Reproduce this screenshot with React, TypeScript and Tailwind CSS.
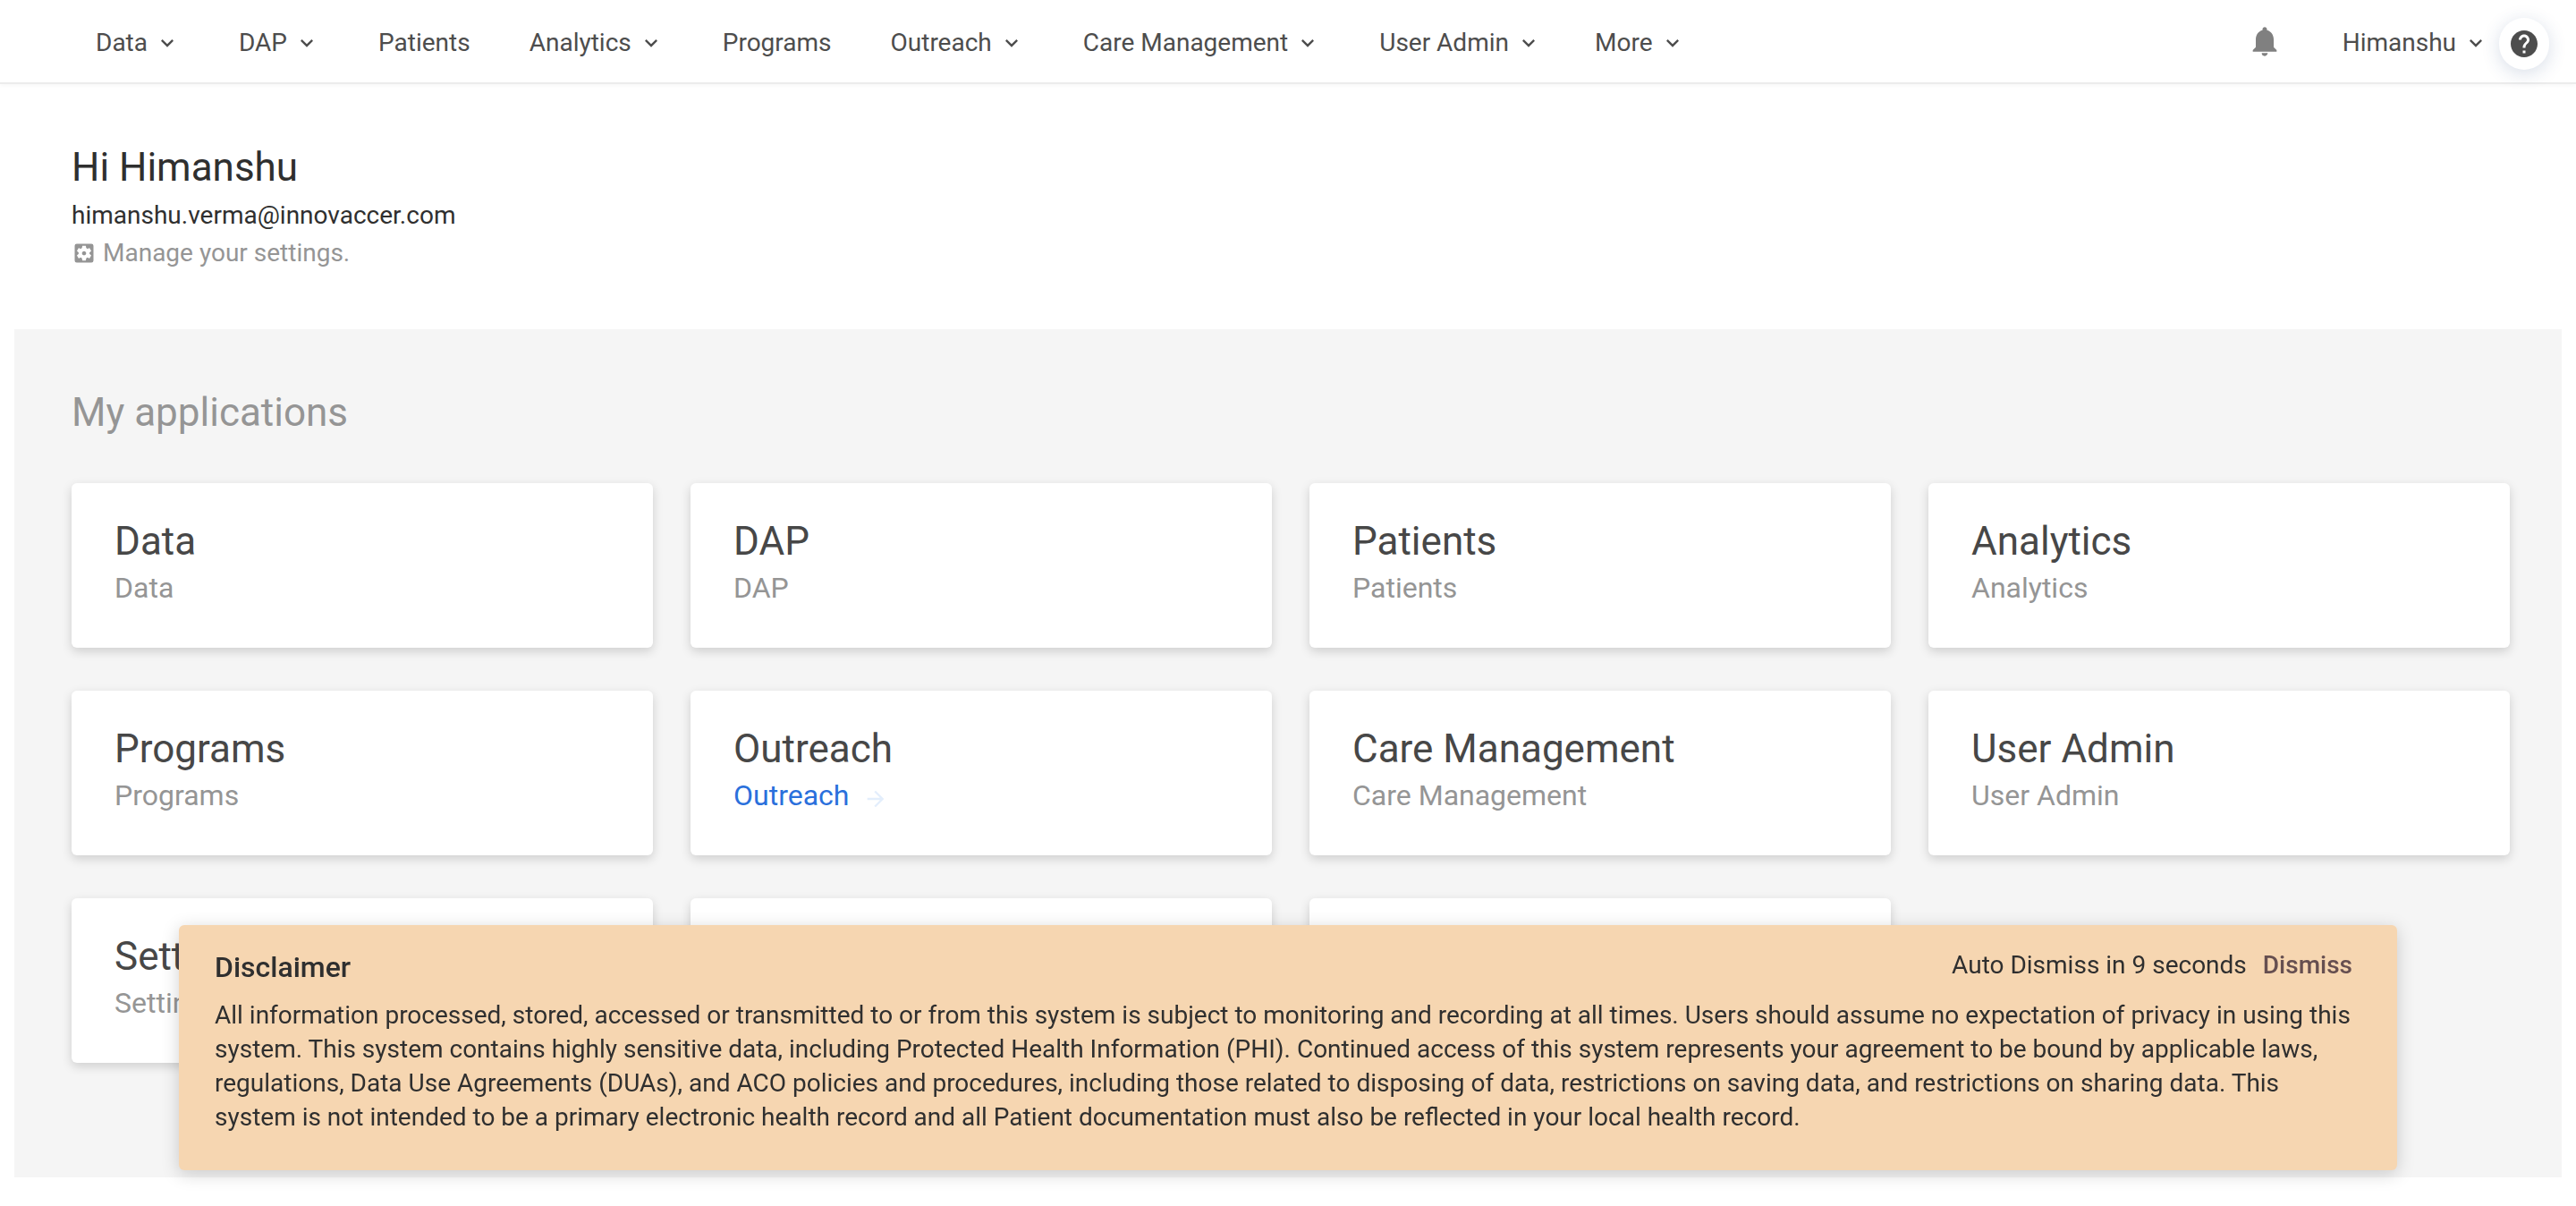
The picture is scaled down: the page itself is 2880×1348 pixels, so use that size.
import React from "react";
import {
  MdArrowForward,
  MdHelp,
  MdKeyboardArrowDown,
  MdNotifications,
  MdSettingsApplications,
} from "react-icons/md";

const navItems = [
  { label: "Data", menu: true },
  { label: "DAP", menu: true },
  { label: "Patients", menu: false },
  { label: "Analytics", menu: true },
  { label: "Programs", menu: false },
  { label: "Outreach", menu: true },
  { label: "Care Management", menu: true },
  { label: "User Admin", menu: true },
];

const apps = [
  "Data",
  "DAP",
  "Patients",
  "Analytics",
  "Programs",
  "Outreach",
  "Care Management",
  "User Admin",
  "Settings",
];

function NavItem({ label, menu }: { label: string; menu: boolean }) {
  if (!menu) {
    return <a href="#">{label}</a>;
  }
  return (
    <button type="button" className="flex items-center gap-2">
      {label}
      <MdKeyboardArrowDown className="size-7" />
    </button>
  );
}

function Header() {
  return (
    <header className="flex h-[94px] items-center justify-between border-b-2 border-[#ececec] pl-[107px] pr-[30px] text-[28px] leading-10 text-[#4d4d4d] shadow-[0_2px_4px_rgba(0,0,0,0.03)]">
      <nav className="flex items-center gap-[60px] pt-[3px] whitespace-nowrap">
        <div className="flex items-center gap-[66px]">
          {navItems.map((item) => (
            <NavItem key={item.label} {...item} />
          ))}
        </div>
        <NavItem label="More" menu />
      </nav>
      <div className="flex items-center">
        <button type="button" aria-label="Notifications" className="mr-[67px] text-[#808080]">
          <MdNotifications className="size-10" />
        </button>
        <div className="mr-3 pt-[3px]">
          <NavItem label="Himanshu" menu />
        </div>
        <button
          type="button"
          aria-label="Help"
          className="mt-1.5 flex h-[58px] w-14 items-center justify-center rounded-full bg-white shadow-[0_4px_20px_rgba(40,70,130,0.18)]"
        >
          <MdHelp className="size-9" />
        </button>
      </div>
    </header>
  );
}

const cardStyle = "block rounded-md bg-white shadow-[0_4px_12px_rgba(0,0,0,0.16)]";

function AppCard({ name, active }: { name: string; active: boolean }) {
  return (
    <a href="#" className={`${cardStyle} px-12 pt-[37px] pb-[47px]`}>
      <h3 className="text-[44px] leading-[56px] text-[#474747]">{name}</h3>
      <p
        className={
          active
            ? "mt-1 flex items-center gap-4 text-[32px] leading-10 text-[#2a70dc]"
            : "mt-1 text-[32px] leading-10 text-[#959595]"
        }
      >
        {name}
        {active && <MdArrowForward className="mt-2 size-7 text-[#e3eefc]" />}
      </p>
    </a>
  );
}

function Disclaimer() {
  return (
    <aside
      aria-label="Disclaimer"
      className="fixed inset-x-[200px] bottom-10 rounded-md bg-[#f6d6b1] pt-[27px] pr-[50px] pb-10 pl-10 text-[28px] text-[#2f2f2f] shadow-[0_4px_20px_rgba(0,0,0,0.18)]"
    >
      <div className="flex items-start justify-between">
        <h2 className="text-[32px] leading-10 font-medium">Disclaimer</h2>
        <div className="flex gap-[18px] leading-9">
          <span>Auto Dismiss in 9 seconds</span>
          <button type="button" className="font-medium text-[#664f50]">
            Dismiss
          </button>
        </div>
      </div>
      <p className="mt-[15px] leading-[38px]">
        All information processed, stored, accessed or transmitted to or from this system is
        subject to monitoring and recording at all times. Users should assume no expectation of
        privacy in using this system. This system contains highly sensitive data, including
        Protected Health Information (PHI). Continued access of this system represents your
        agreement to be bound by applicable laws, regulations, Data Use Agreements (DUAs), and ACO
        policies and procedures, including those related to disposing of data, restrictions on
        saving data, and restrictions on sharing data. This system is not intended to be a primary
        electronic health record and all Patient documentation must also be reflected in your local
        health record.
      </p>
    </aside>
  );
}

export default function App() {
  return (
    <div className="bg-white pb-8 font-['Roboto',sans-serif]">
      <Header />
      <section className="px-20 pt-[65px] pb-[65px] text-[28px] leading-10">
        <h1 className="text-[44px] leading-[56px] text-[#2f2f2f]">Hi Himanshu</h1>
        <p className="mt-1.5 text-[#2f2f2f]">himanshu.verma@innovaccer.com</p>
        <a href="#" className="mt-0.5 flex items-center gap-[7px] text-[#959595]">
          <MdSettingsApplications className="size-7" />
          Manage your settings.
        </a>
      </section>
      <main className="mx-4 bg-[#f5f5f5] pt-[65px] pr-[58px] pb-32 pl-16">
        <h2 className="text-[44px] leading-[56px] text-[#959595]">My applications</h2>
        <div className="mt-[51px] grid grid-cols-4 gap-x-[42px] gap-y-12">
          {apps.map((name) => (
            <AppCard key={name} name={name} active={name === "Outreach"} />
          ))}
          <div className={cardStyle} />
          <div className={cardStyle} />
        </div>
      </main>
      <Disclaimer />
    </div>
  );
}
